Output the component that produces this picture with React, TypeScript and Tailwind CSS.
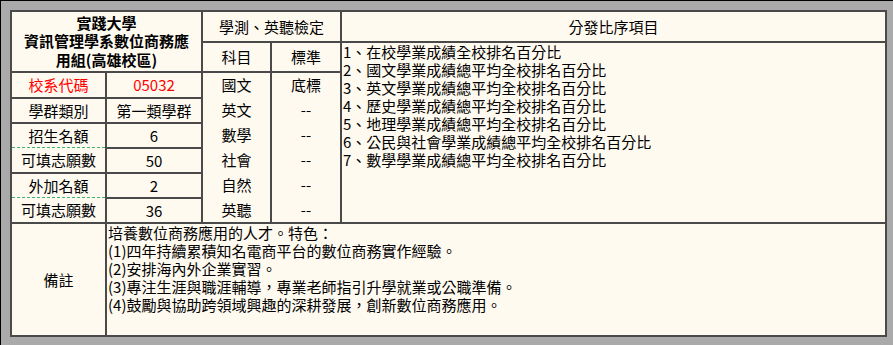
import React from "react";

const cell = "bg-[#fffaf0] flex items-center justify-center";

const SUBJECTS = ["國文", "英文", "數學", "社會", "自然", "英聽"];
const STANDARDS = ["底標", "--", "--", "--", "--", "--"];

const ORDER_ITEMS = [
  "1、在校學業成績全校排名百分比",
  "2、國文學業成績總平均全校排名百分比",
  "3、英文學業成績總平均全校排名百分比",
  "4、歷史學業成績總平均全校排名百分比",
  "5、地理學業成績總平均全校排名百分比",
  "6、公民與社會學業成績總平均全校排名百分比",
  "7、數學學業成績總平均全校排名百分比",
];

const REMARKS = [
  "培養數位商務應用的人才。特色：",
  "(1)四年持續累積知名電商平台的數位商務實作經驗。",
  "(2)安排海內外企業實習。",
  "(3)專注生涯與職涯輔導，專業老師指引升學就業或公職準備。",
  "(4)鼓勵與協助跨領域興趣的深耕發展，創新數位商務應用。",
];

// label cell holding two rows split by a green dashed line
function SplitLabel({ top, bottom }: { top: string; bottom: string }) {
  return (
    <div className="row-span-2 bg-[#fffaf0] flex flex-col">
      <div className="h-[23px] flex items-center justify-center">{top}</div>
      <div className="flex-1 flex items-center justify-center border-t border-dashed border-[#3cb371]">
        {bottom}
      </div>
    </div>
  );
}

export default function App() {
  return (
    <div
      className="w-[893px] h-[345px] overflow-hidden bg-[#aaaaaa] border-t border-l border-black pt-[9px] pl-[9px] text-black text-[15px] leading-[18px]"
      style={{ fontFamily: '"Noto Sans CJK TC", "Liberation Sans", sans-serif' }}
    >
      <div className="w-[877px] grid grid-cols-[93px_94px_67px_68px_543px] grid-rows-[29px_28px_24px_23px_23px_23px_23px_23px_111px] gap-[2px] bg-[#4a4a4a] border-2 border-[#4a4a4a]">
        {/* header */}
        <div className={`${cell} col-span-2 row-span-2 flex-col font-bold leading-[18.5px]`}>
          <span>實踐大學</span>
          <span>資訊管理學系數位商務應</span>
          <span>用組(高雄校區)</span>
        </div>
        <div className={`${cell} col-span-2`}>學測、英聽檢定</div>
        <div className={cell}>分發比序項目</div>
        <div className={cell}>科目</div>
        <div className={cell}>標準</div>

        {/* ranking items */}
        <div className="row-span-7 bg-[#fffaf0] pl-px">
          {ORDER_ITEMS.map((item) => (
            <div key={item}>{item}</div>
          ))}
        </div>

        <div className={`${cell} text-[#ff0000]`}>校系代碼</div>
        <div className={`${cell} text-[#ff0000]`}>05032</div>

        <div className="row-span-6 bg-[#fffaf0] flex flex-col">
          {SUBJECTS.map((s) => (
            <div key={s} className="flex-1 flex items-center justify-center">
              {s}
            </div>
          ))}
        </div>
        <div className="row-span-6 bg-[#fffaf0] flex flex-col">
          {STANDARDS.map((s, i) => (
            <div key={i} className="flex-1 flex items-center justify-center">
              {s}
            </div>
          ))}
        </div>

        <div className={cell}>學群類別</div>
        <div className={cell}>第一類學群</div>

        <SplitLabel top="招生名額" bottom="可填志願數" />
        <div className={cell}>6</div>
        <div className={cell}>50</div>

        <SplitLabel top="外加名額" bottom="可填志願數" />
        <div className={cell}>2</div>
        <div className={cell}>36</div>

        {/* remarks */}
        <div className={cell}>備註</div>
        <div className="col-span-4 bg-[#fffaf0] pl-px">
          {REMARKS.map((r) => (
            <div key={r}>{r}</div>
          ))}
        </div>
      </div>
    </div>
  );
}
